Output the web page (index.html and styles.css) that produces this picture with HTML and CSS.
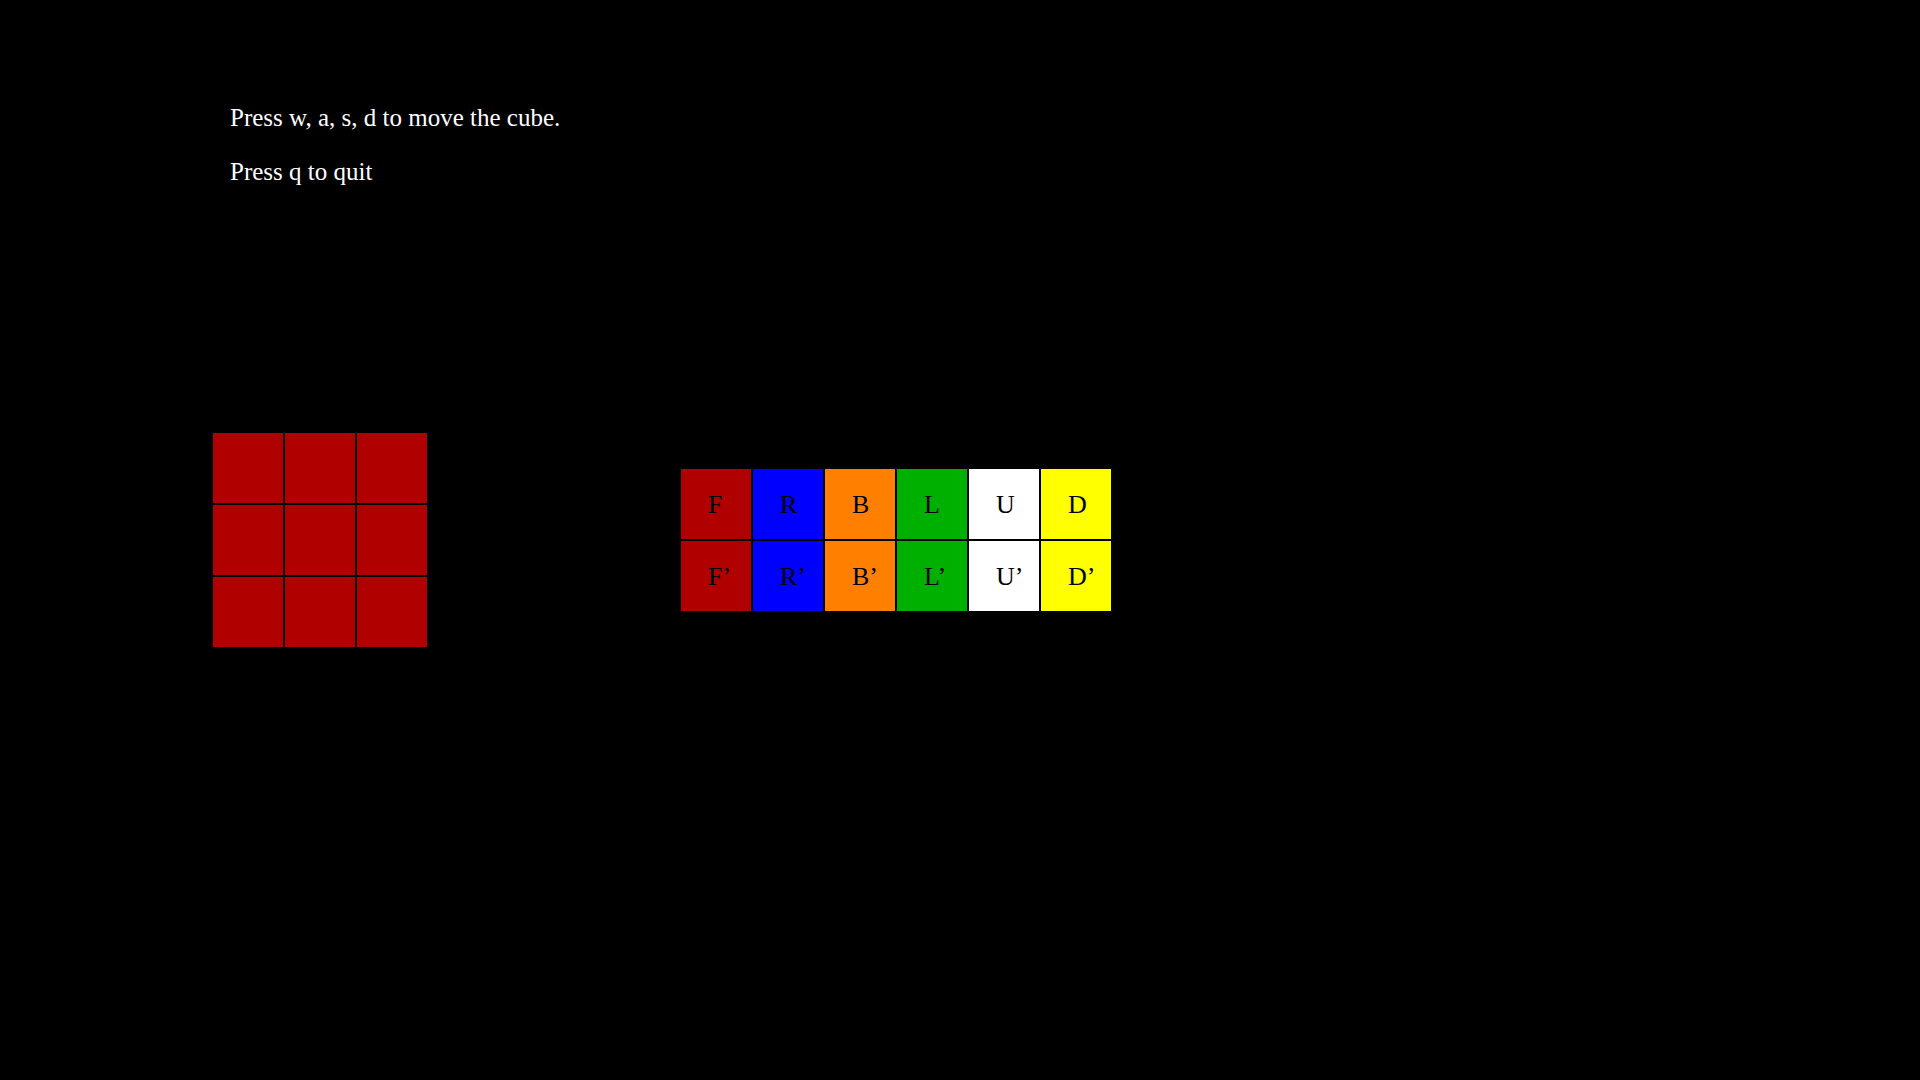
FILE: index.html
```html
<!DOCTYPE html>
<html>
<head>
<meta charset="utf-8">
<link rel="stylesheet" href="styles.css">
</head>
<body>
<div class="page">
  <div class="instructions">
    <p>Press w, a, s, d to move the cube.</p>
    <p>Press q to quit</p>
  </div>
  <div class="board">
    <div class="face">
      <div class="sticker"></div><div class="sticker"></div><div class="sticker"></div>
      <div class="sticker"></div><div class="sticker"></div><div class="sticker"></div>
      <div class="sticker"></div><div class="sticker"></div><div class="sticker"></div>
    </div>
    <div class="moves">
      <div class="move red">F</div>
      <div class="move blue">R</div>
      <div class="move orange">B</div>
      <div class="move green">L</div>
      <div class="move white">U</div>
      <div class="move yellow">D</div>
      <div class="move red">F’</div>
      <div class="move blue">R’</div>
      <div class="move orange">B’</div>
      <div class="move green">L’</div>
      <div class="move white">U’</div>
      <div class="move yellow">D’</div>
    </div>
  </div>
</div>
</body>
</html>
```

FILE: styles.css
```css
html, body {
  margin: 0;
  padding: 0;
  background: #000;
}
body {
  font-family: "Liberation Serif", "Times New Roman", serif;
  color: #fff;
}
.page {
  width: 1920px;
  height: 1080px;
  display: flex;
  flex-direction: column;
}
.instructions {
  padding-top: 104px;
  padding-left: 230px;
  display: flex;
  flex-direction: column;
  gap: 26px;
}
.instructions p {
  margin: 0;
  font-size: 25px;
  line-height: 28px;
}
.board {
  margin-top: 247px;
  padding-left: 213px;
  display: flex;
  align-items: center;
  gap: 254px;
}
.face {
  display: grid;
  grid-template-columns: repeat(3, 70px);
  grid-template-rows: repeat(3, 70px);
  gap: 2px;
}
.sticker {
  background: #b00000;
}
.moves {
  display: grid;
  grid-template-columns: repeat(6, 70px);
  grid-template-rows: repeat(2, 70px);
  gap: 2px;
}
.move {
  display: flex;
  align-items: center;
  justify-content: flex-start;
  box-sizing: border-box;
  padding-left: 27px;
  padding-top: 1px;
  color: #000;
  font-size: 26px;
}
.red { background: #b00000; }
.blue { background: #0000ff; }
.orange { background: #ff8000; }
.green { background: #00b000; }
.white { background: #ffffff; }
.yellow { background: #ffff00; }
```
